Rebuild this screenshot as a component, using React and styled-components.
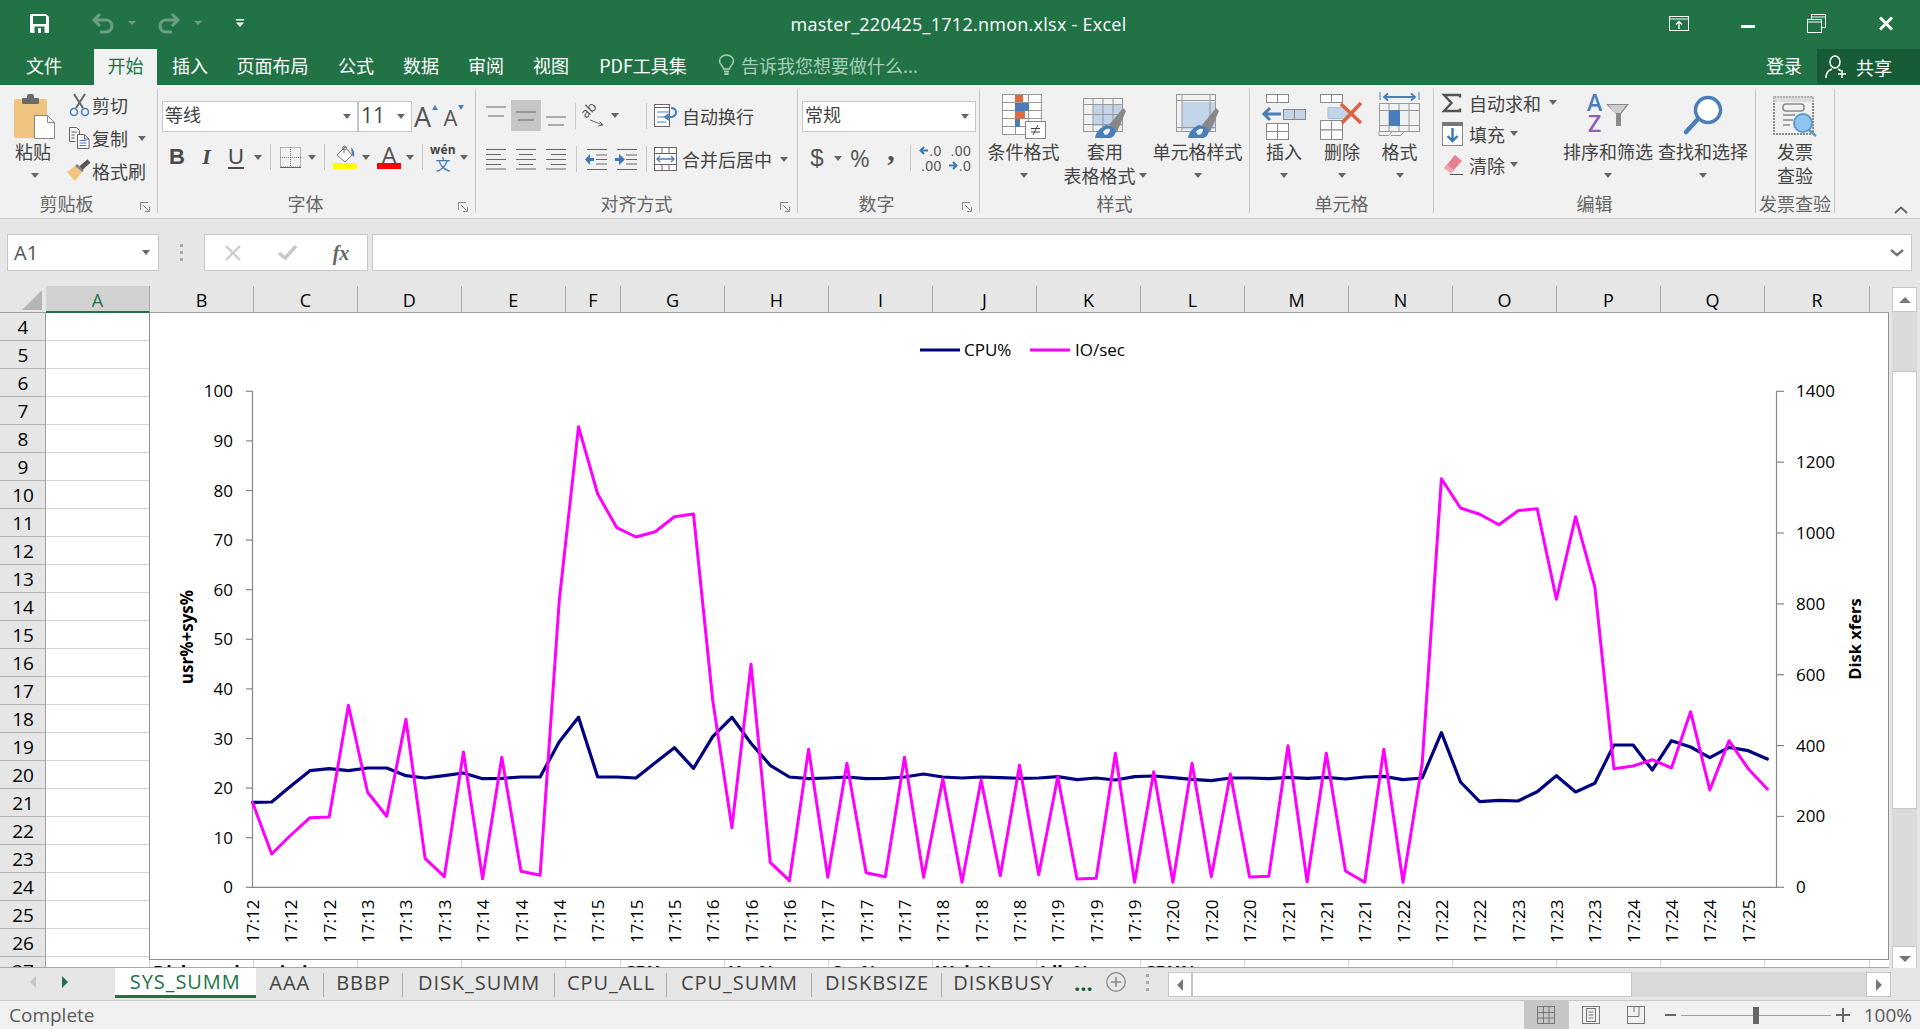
import React from 'react';
import styled, { createGlobalStyle } from 'styled-components';

const UI = `"Open Sans","Noto Sans CJK SC",sans-serif`;
const CJK = `"Noto Sans CJK SC","Open Sans",sans-serif`;
const GREEN = '#217346';
const BLUE = '#4a7ebb';

const Global = createGlobalStyle`
  html, body { margin: 0; padding: 0; width: 1920px; height: 1029px; overflow: hidden; background: #f1f1f1; }
  * { box-sizing: border-box; }
  #root { width: 1920px; height: 1029px; }
`;

const Window = styled.div`
  width: 1920px; height: 1029px; display: flex; flex-direction: column; font-family: ${CJK}; overflow: hidden;
`;
const Cell = styled.div`
  flex: 0 0 auto; width: ${p => p.$w}px; margin-left: ${p => p.$ml || 0}px; height: 100%;
  display: flex; align-items: center; justify-content: center;
`;
const Ico = styled.svg` display: block; flex: 0 0 auto; overflow: visible; `;

/* title bar */
const TitleBar = styled.header`
  height: 49px; background: ${GREEN}; display: grid; grid-template-columns: 1fr auto 1fr; flex: 0 0 auto;
`;
const Qat = styled.div` display: flex; height: 46px; padding-left: 12px; `;
const TitleText = styled.div`
  font: 18px/48px ${UI}; color: #fff; padding-right: 3px; white-space: nowrap; letter-spacing: .26px;
`;
const WinCtrls = styled.div` display: flex; justify-content: flex-end; height: 46px; `;
const DimCaret = styled.span`
  width: 0; height: 0; border-left: 4px solid transparent; border-right: 4px solid transparent; border-top: 4px solid #6b9e85;
`;

/* tabs */
const TabRow = styled.nav`
  height: 36px; background: ${GREEN}; display: flex; flex: 0 0 auto;
`;
const RibbonTab = styled.div`
  flex: 0 0 auto; width: ${p => p.$w}px; padding: 0 ${p => p.$pr || 0}px 4px 0; height: 100%; display: flex; align-items: center; justify-content: center;
  font: 18px/1 ${CJK}; white-space: nowrap;
  color: ${p => p.$active ? GREEN : '#fff'}; background: ${p => p.$active ? '#f1f1f1' : 'transparent'};
`;
const TellMe = styled.div`
  font: 18px/1 ${CJK}; color: #a6cdb8; display: flex; align-items: center; white-space: nowrap; padding-bottom: 4px;
`;
const LoginCell = styled(RibbonTab)` margin-left: auto; `;
const Share = styled.div`
  width: 103px; height: 35px; background: #185c37; display: flex; align-items: center; padding-left: 8px; gap: 8px;
  font: 18px/1 ${CJK}; color: #fff;
`;

/* ribbon */
const Ribbon = styled.section`
  height: 134px; flex: 0 0 auto; background: #f1f1f1; border-bottom: 1px solid #c6c6c6; display: flex; padding-top: 4px;
`;
const Group = styled.div`
  position: relative; flex: 0 0 auto; width: ${p => p.$w}px; height: 124px; border-right: 1px solid #c6c6c6;
`;
const GroupBody = styled.div`
  height: 104px; display: flex;
`;
const GroupLabel = styled.div`
  height: 20px; font: 18px/20px ${CJK}; color: #666; text-align: center; white-space: nowrap;
  padding-right: ${p => p.$pr || 0}px;
`;
const Launcher = styled.div`
  position: absolute; right: 7px; bottom: 1px; width: 10px; height: 10px;
`;
const Lbl = styled.span`
  font: 18px/24px ${CJK}; color: #444; white-space: nowrap; margin-left: ${p => p.$ml || 0}px;
`;
const Caret = styled.span`
  display: inline-block; flex: 0 0 auto; width: 0; height: 0; border-left: 4px solid transparent; border-right: 4px solid transparent; border-top: 5px solid #666;
  margin-left: ${p => p.$ml || 0}px;
`;
const PasteCol = styled.div`
  width: 66px; flex: 0 0 auto; display: flex; flex-direction: column; align-items: center; padding-top: 5px;
`;
const PasteIcon = styled.div` height: 45px; padding-left: 3px; `;
const CaretLine = styled.div`
  height: 24px; display: flex; align-items: center; justify-content: center; width: 100%;
`;
const ClipCol = styled.div`
  flex: 1; display: flex; flex-direction: column; gap: 9px; padding-top: 4px;
`;
const ClipRow = styled.div`
  height: 24px; display: flex; align-items: center; gap: 0;
`;
const StackCol = styled.div`
  flex: 0 0 auto; display: flex; flex-direction: column; padding-top: ${p => p.$pt || 12}px; padding-left: ${p => p.$pl || 0}px; gap: ${p => p.$gap ?? 11}px;
`;
const Row = styled.div`
  display: flex; align-items: center; height: ${p => p.$h || 31}px;
`;
const Combo = styled.div`
  width: ${p => p.$w}px; height: 31px; background: #fff; border: 1px solid #c6c6c6; display: flex; align-items: center; justify-content: space-between;
  padding: 0 6px 0 2px; flex: 0 0 auto; font: ${p => p.$fs || 18}px/1 ${UI}; color: #444;
`;
const ComboText = styled.span` padding-bottom: 3px; `;
const GrowA = styled.span`
  font: ${p => p.$s}px/1 ${UI}; color: #555;
`;
const TinyTri = styled.span`
  display: inline-block; width: 0; height: 0; border-left: 3.5px solid transparent; border-right: 3.5px solid transparent;
  ${p => p.$down ? `border-top: 5px solid ${BLUE};` : `border-bottom: 5px solid ${BLUE};`}
  margin-left: 1px; align-self: flex-start; margin-top: 4px;
`;
const FontBtn = styled.span`
  font: ${p => p.$i ? 'italic ' : ''}${p => p.$b ? 'bold ' : ''}22px/1 ${p => p.$serif ? '"Liberation Serif"' : '"Liberation Sans"'}, sans-serif; color: #4a4a4a;
  text-decoration: ${p => p.$u ? 'underline' : 'none'}; text-underline-offset: 3px;
`;
const VSep = styled.div`
  width: 1px; height: 26px; background: #c6c6c6;
`;
const ActiveAlign = styled.div`
  width: 30px; height: 31px; background: #c6c6c6; display: flex; align-items: center; justify-content: center; flex: 0 0 auto;
`;
const ColorA = styled.div`
  display: flex; flex-direction: column; align-items: center; width: 24px;
`;
const ColorAText = styled.span`
  font: 24px/20px ${UI}; color: #555; height: 18px;
`;
const ColorBar = styled.div`
  width: 24px; height: 6px; background: ${p => p.$c};
`;
const Wen = styled.div`
  display: flex; flex-direction: column; align-items: center;
`;
const WenTop = styled.span`
  font: bold 12px/12px "Open Sans", sans-serif; color: #444; letter-spacing: .2px;
`;
const WenBot = styled.span`
  font: 15px/15px ${CJK}; color: #3b78b7;
`;
const Cash = styled.span`
  font: 24px/1 ${p => p.$f || '"Liberation Sans"'}, sans-serif; color: #555;
`;
const Comma = styled.span`
  font: bold 30px/1 "Liberation Serif", serif; color: #555; margin-top: -16px;
`;
const Dec = styled.div`
  display: flex; flex-direction: column; align-items: flex-end; font: 14px/14px "Liberation Sans", sans-serif; color: #555; letter-spacing: .4px; gap: 1px;
`;
const DecLine = styled.div` display: flex; align-items: center; gap: 1px; `;
const LargeBtn = styled.div`
  flex: 0 0 auto; width: ${p => p.$w}px; display: flex; flex-direction: column; align-items: center; padding: 5px 0 0 ${p => p.$pl || 0}px;
`;
const IconSlot = styled.div` height: 45px; display: flex; justify-content: center; `;
const Line2 = styled.div`
  height: 24px; display: flex; align-items: center; justify-content: center; white-space: nowrap;
`;
const TextLine = styled.div`
  height: 24px; line-height: 24px; white-space: nowrap; text-align: center;
`;
const EditCol = styled.div` flex: 0 0 auto; width: 131px; display: flex; flex-direction: column; margin-top: -2px; `;
const EditRow = styled.div` height: 31px; display: flex; align-items: center; `;
const RibbonRest = styled.div`
  flex: 1; display: flex; justify-content: flex-end; align-items: flex-end; padding: 0 12px 4px 0;
`;

/* formula bar */
const FormulaBar = styled.div`
  height: 67px; flex: 0 0 auto; background: #e6e6e6; display: flex; padding: 15px 8px 15px 7px;
`;
const NameBox = styled.div`
  width: 152px; background: #fff; border: 1px solid #c6c6c6; display: flex; align-items: center; justify-content: space-between;
  padding: 0 8px 0 6px; font: 20px/1 ${UI}; color: #555;
`;
const FormulaBtns = styled.div`
  width: 164px; background: #fff; border: 1px solid #c6c6c6; display: flex; align-items: center;
`;
const FxText = styled.span`
  font: italic bold 20px/1 "Liberation Serif", serif; color: #666;
`;
const FormulaInput = styled.div`
  flex: 1; margin-left: 4px; background: #fff; border: 1px solid #c6c6c6; display: flex; align-items: center; justify-content: flex-end; padding-right: 7px;
`;

/* grid */
const SheetArea = styled.div`
  height: 682px; flex: 0 0 auto; display: flex; background: #e6e6e6;
`;
const SheetMain = styled.div` width: 1889px; flex: 0 0 auto; display: flex; flex-direction: column; `;
const ColHeaders = styled.div`
  height: 27px; display: flex; background: #e6e6e6; border-bottom: 1px solid #9f9f9f; flex: 0 0 auto;
`;
const Corner = styled.div`
  width: 46px; flex: 0 0 auto; position: relative;
`;
const ColHead = styled.div`
  width: ${p => p.$w}px; flex: 0 0 auto; display: flex; align-items: center; justify-content: center;
  font: 18px/1 ${UI}; padding-top: 2px; color: ${p => p.$sel ? GREEN : '#000'};
  background: ${p => p.$sel ? '#d2d2d2' : 'transparent'};
  border-right: 1px solid #ababab;
  border-bottom: ${p => p.$sel ? `2px solid ${GREEN}` : 'none'};
  margin-bottom: ${p => p.$sel ? '-1px' : '0'};
`;
const GridBody = styled.div`
  position: relative; height: 655px; background: #fff; overflow: hidden; border-bottom: 1px solid #a8a8a8;
`;
const GridRow = styled.div` height: 28px; display: flex; `;
const RowHead = styled.div`
  width: 46px; flex: 0 0 auto; background: #e6e6e6; display: flex; align-items: center; justify-content: center; padding: 2px 0 0 1px;
  font: 19px/1 ${UI}; color: #000; border-right: 1px solid #9f9f9f; border-bottom: 1px solid #b4b4b4;
`;
const GridCell = styled.div`
  width: ${p => p.$w}px; flex: 0 0 auto; border-right: 1px solid #d4d4d4; border-bottom: 1px solid #d4d4d4;
  font: bold 18px/30px "Open Sans", sans-serif; color: #000; white-space: nowrap; padding-left: 3px;
`;
const ChartFrame = styled.div`
  position: absolute; left: 149px; top: 0; width: 1740px; height: 647px; background: #fff;
  border: 1px solid #8f8f8f; border-top: none;
`;
const ChartT = styled.text`
  font: ${p => p.$b ? 'bold ' : ''}${p => p.$s || 17}px "Open Sans", sans-serif; fill: #000;
`;

/* vertical scroll */
const VScroll = styled.div`
  width: 31px; flex: 0 0 auto; display: flex; flex-direction: column; padding: 1px 3px 0 3px;
`;
const ScrollBtn = styled.div`
  height: ${p => p.$h || 25}px; width: ${p => p.$w || 25}px; flex: 0 0 auto; background: #fff; border: 1px solid #c6c6c6; display: flex; align-items: center; justify-content: center;
`;
const VTrack = styled.div`
  height: 634px; background: #dadada; display: flex; flex-direction: column; flex: 0 0 auto;
`;
const VThumb = styled.div`
  margin-top: 59px; height: 438px; background: #fff; border: 1px solid #c6c6c6;
`;
const Tri = styled.span`
  width: 0; height: 0; display: block;
  ${p => p.$dir === 'up' && 'border-left:6px solid transparent;border-right:6px solid transparent;border-bottom:6px solid #777;'}
  ${p => p.$dir === 'down' && 'border-left:6px solid transparent;border-right:6px solid transparent;border-top:6px solid #777;'}
  ${p => p.$dir === 'left' && 'border-top:6px solid transparent;border-bottom:6px solid transparent;border-right:6px solid #777;'}
  ${p => p.$dir === 'right' && 'border-top:6px solid transparent;border-bottom:6px solid transparent;border-left:6px solid #777;'}
`;

/* tabs bar */
const TabBar = styled.div`
  height: 33px; flex: 0 0 auto; background: #e6e6e6; border-bottom: 1px solid #c8c8c8; display: flex;
`;
const TabsLeft = styled.div` width: 1168px; flex: 0 0 auto; display: flex; `;
const TabNav = styled.div` width: 115px; flex: 0 0 auto; display: flex; align-items: center; padding-bottom: 4px; `;
const NavTri = styled.span`
  width: 0; height: 0; border-top: 6px solid transparent; border-bottom: 6px solid transparent; flex: 0 0 auto;
  ${p => p.$left ? 'border-right: 6px solid #c6c6c6;' : `border-left: 6px solid ${GREEN};`}
  margin-left: ${p => p.$ml}px;
`;
const SheetTab = styled.div`
  width: ${p => p.$w}px; flex: 0 0 auto; height: 30px; display: flex; align-items: center; justify-content: center; white-space: nowrap;
  font: 20px/1 "Open Sans", sans-serif; letter-spacing: .95px;
  color: ${p => p.$active ? GREEN : '#444'};
  background: ${p => p.$active ? '#fff' : 'transparent'};
  border-bottom: ${p => p.$active ? `3px solid ${GREEN}` : '0'};
  position: relative;
  &::after {
    content: ''; position: absolute; right: 0; top: 5px; bottom: 1px; width: 1px; background: ${p => p.$active || p.$nosep ? 'transparent' : '#ababab'};
  }
`;
const More = styled.span`
  font: bold 22px/1 "Open Sans", sans-serif; color: #0f5c2e; margin-left: 9px; padding-top: 3px; letter-spacing: 0;
`;
const HScroll = styled.div`
  display: flex; height: 25px; margin-top: 4px; width: 723px; flex: 0 0 auto;
`;
const HThumb = styled.div`
  width: 440px; background: #fff; border: 1px solid #c6c6c6; flex: 0 0 auto;
`;
const HTrack = styled.div` flex: 1; background: #d9d9d9; `;

/* status */
const StatusBar = styled.footer`
  height: 28px; flex: 0 0 auto; background: #f1f1f1; display: flex; align-items: center; font: 19px/1 "Open Sans", sans-serif; color: #5a5a5a;
`;
const StatusText = styled.span` margin-left: 9px; margin-right: auto; `;
const ViewBtn = styled.div`
  width: 45px; height: 28px; flex: 0 0 auto; display: flex; align-items: center; justify-content: center;
  background: ${p => p.$active ? '#c6c6c6' : 'transparent'};
`;
const Slider = styled.div`
  width: 150px; height: 1px; background: #a0a0a0; position: relative; flex: 0 0 auto;
`;
const SliderThumb = styled.div`
  position: absolute; left: 72px; top: -8px; width: 6px; height: 17px; background: #666;
`;
const Zoom = styled.span` margin: 0 8px 0 14px; `;

/* ------------ icons ------------ */
const SaveIcon = () => (
  <Ico width="19" height="19" viewBox="0 0 19 19">
    <path d="M1 0h15l3 3v15a1 1 0 0 1-1 1H1a1 1 0 0 1-1-1V1a1 1 0 0 1 1-1z" fill="#fff" />
    <rect x="3" y="2" width="13" height="8" fill={GREEN} />
    <rect x="4.5" y="12.5" width="10" height="6.5" fill={GREEN} />
    <rect x="8" y="14" width="3" height="5" fill="#fff" />
  </Ico>
);
const UndoIcon = ({ flip }) => (
  <Ico width="22" height="20" viewBox="0 0 22 20" style={flip ? { transform: 'scaleX(-1)' } : undefined}>
    <path d="M8 1 L2 7 L8 13 M2 7 H14 a6 6 0 0 1 0 12 H8" fill="none" stroke="#6b9e85" strokeWidth="3" />
  </Ico>
);
const QatMore = () => (
  <Ico width="8" height="9" viewBox="0 0 8 9"><rect x="0" y="0" width="8" height="1.5" fill="#fff" /><path d="M0 3.5h8L4 8z" fill="#fff" /></Ico>
);
const RibbonDisplay = () => (
  <Ico width="20" height="15" viewBox="0 0 20 15">
    <rect x=".5" y=".5" width="19" height="14" fill="none" stroke="#fff" />
    <line x1="0" y1="3" x2="20" y2="3" stroke="#fff" />
    <path d="M10 13V6M7 8.5l3-3 3 3" fill="none" stroke="#fff" strokeWidth="1.4" />
  </Ico>
);
const MinIcon = () => <Ico width="14" height="3" viewBox="0 0 14 3" style={{ marginTop: 6 }}><rect width="14" height="3" fill="#fff" /></Ico>;
const RestoreIcon = () => (
  <Ico width="19" height="19" viewBox="0 0 19 19">
    <rect x="4.5" y=".5" width="14" height="13" fill="none" stroke="#fff" />
    <line x1="4" y1="3" x2="19" y2="3" stroke="#fff" />
    <rect x=".5" y="5.5" width="14" height="13" fill={GREEN} stroke="#fff" />
    <line x1="0" y1="8" x2="15" y2="8" stroke="#fff" />
  </Ico>
);
const CloseIcon = () => <Ico width="14" height="13" viewBox="0 0 14 13"><path d="M1 0.5 L13 12.5 M13 0.5 L1 12.5" stroke="#fff" strokeWidth="3" /></Ico>;
const Bulb = () => (
  <Ico width="17" height="21" viewBox="0 0 17 21" fill="none" stroke="#a6cdb8" strokeWidth="1.5" style={{ marginBottom: 4 }}>
    <path d="M5.5 14c0-3-4-4-4-8a7 6 0 0 1 14 0c0 4-4 5-4 8z" />
    <path d="M6 16.5h5M6.5 19h4" strokeWidth="2" />
  </Ico>
);
const PersonPlus = () => (
  <Ico width="23" height="24" viewBox="0 0 23 24" fill="none" stroke="#fff" strokeWidth="1.5">
    <ellipse cx="10" cy="7" rx="5" ry="6" />
    <path d="M1 23c0-5 3-8 6-9M13 14c1 .5 2 1 3 2" />
    <path d="M17 15v8M13 19h8" />
  </Ico>
);
const PasteIco = () => (
  <Ico width="42" height="46" viewBox="0 0 42 46">
    <rect x="0" y="5" width="33" height="39" rx="2" fill="#efc47f" />
    <rect x="8" y="4" width="17" height="6" rx="1" fill="#6a6a6a" />
    <rect x="13" y="0" width="7" height="6" rx="2" fill="#6a6a6a" />
    <path d="M20.5 21.5h13l7 7v16h-20z" fill="#fff" stroke="#888" />
    <path d="M33.5 21.5v7h7" fill="none" stroke="#888" />
  </Ico>
);
const CutIco = () => (
  <Ico width="21" height="23" viewBox="0 0 21 23" fill="none">
    <path d="M7 14L16 0M14 14L5 0" stroke="#666" strokeWidth="2" />
    <circle cx="5" cy="18" r="3.5" stroke={BLUE} strokeWidth="1.6" />
    <circle cx="16" cy="18" r="3.5" stroke={BLUE} strokeWidth="1.6" />
  </Ico>
);
const CopyIco = () => (
  <Ico width="21" height="22" viewBox="0 0 21 22" fill="none" stroke="#666">
    <path d="M.5.5h7l3 3v4M.5.5v14h6" />
    <path d="M2.5 5h5M2.5 8h3M2.5 11h3" />
    <path d="M8.5 7.5h7l4.5 4.5v9.5H8.5z" fill="#fff" />
    <path d="M15.5 7.5v4.5h4.5" />
    <path d="M10.5 13.5h7M10.5 16h7M10.5 18.5h7" stroke={BLUE} />
  </Ico>
);
const PainterIco = () => (
  <Ico width="24" height="22" viewBox="0 0 24 22">
    <path d="M0 12l8-6 7 6-7 9z" fill="#efc47f" />
    <path d="M8 6l7 6 2-2-7-6z" fill="#888" />
    <path d="M14 8l8-7" stroke="#555" strokeWidth="4.5" />
  </Ico>
);
const Launch = () => (
  <Ico width="10" height="10" viewBox="0 0 10 10" fill="none" stroke="#888">
    <path d="M.5 8V.5H8" /><path d="M3 3l5.5 5.5M9.5 5v4.5H5" />
  </Ico>
);
const Borders = () => (
  <Ico width="21" height="21" viewBox="0 0 21 21" fill="none" stroke="#777">
    <rect x=".5" y=".5" width="20" height="19.5" strokeDasharray="1 1" />
    <path d="M10.5 0v20M0 10.5h21" strokeDasharray="1 1" />
    <path d="M0 20.5h21" stroke="#666" />
  </Ico>
);
const Bucket = () => (
  <Ico width="24" height="18" viewBox="0 0 24 18" fill="none">
    <path d="M4 10l8-8 7 8-7 7z" fill="#fff" stroke="#777" />
    <path d="M11 1.5v7" stroke="#777" />
    <circle cx="11.5" cy="3" r="2" stroke="#777" />
    <path d="M18 2c3 3 4 6 3 10l-2-2z" fill={BLUE} />
  </Ico>
);
const AlignLines = ({ kind }) => {
  const y = kind === 'top' ? [5, 14] : kind === 'mid' ? [10, 18] : [15, 23];
  return (
    <Ico width="20" height="28" viewBox="0 0 20 28" stroke="#666">
      <line x1="0" x2="20" y1={y[0]} y2={y[0]} /><line x1="2" x2="18" y1={y[1]} y2={y[1]} />
    </Ico>
  );
};
const TextLines = ({ kind }) => {
  const ys = [0, 5, 10, 15, 19.5];
  return (
    <Ico width="20" height="21" viewBox="0 0 20 21" stroke="#666">
      {ys.map((yy, i) => {
        const short = i % 2 === 1;
        const x1 = kind === 'right' && short ? 5 : kind === 'center' && short ? 3 : 0;
        const x2 = kind === 'left' && short ? 15 : kind === 'center' && short ? 17 : 20;
        return <line key={i} x1={x1} x2={x2} y1={yy + .5} y2={yy + .5} />;
      })}
    </Ico>
  );
};
const Orient = () => (
  <Ico width="22" height="20" viewBox="0 0 22 20">
    <text x="0" y="0" transform="translate(2 13) rotate(-45)" style={{ font: '14px "Open Sans", sans-serif', fill: '#555' }}>ab</text>
    <path d="M6 14L19 19M15.500 15.500 L19 19 L14 20" stroke="#666" fill="none" />
  </Ico>
);
const Indent = ({ right }) => (
  <Ico width="22" height="21" viewBox="0 0 22 21" stroke="#666">
    <line x1="2" x2="22" y1=".5" y2=".5" /><line x1="2" x2="22" y1="20.5" y2="20.5" />
    <line x1="11" x2="22" y1="6" y2="6" /><line x1="11" x2="22" y1="10.5" y2="10.5" /><line x1="11" x2="22" y1="15" y2="15" />
    {right
      ? <path d="M0 9h4V5l6 5.500-6 5.500v-4H0z" fill="#3b78b7" stroke="none" />
      : <path d="M9 9H5V5L0 10.500 5 16v-4h4z" fill="#3b78b7" stroke="none" />}
  </Ico>
);
const WrapIco = () => (
  <Ico width="24" height="23" viewBox="0 0 24 23" fill="none" stroke="#666">
    <rect x=".5" y=".5" width="15" height="22" fill="#fff" />
    <path d="M0 3.500h15" /><path d="M3 8h12M3 13h7M3 18h9" stroke={BLUE} />
    <path d="M17 4c6 0 7 7 1 9h-6" stroke={BLUE} strokeWidth="2" /><path d="M15 10l-4 3 4 3" stroke={BLUE} strokeWidth="2" />
  </Ico>
);
const MergeIco = () => (
  <Ico width="23" height="24" viewBox="0 0 23 24" fill="none" stroke="#666">
    <rect x=".5" y=".5" width="22" height="23" fill="#fff" />
    <path d="M0 6.500h23M0 17.500h23M8 .5v6M15 .5v6M8 17.500v6M15 17.500v6" />
    <path d="M3 12h17M6 9l-3 3 3 3M17 9l3 3-3 3" stroke={BLUE} strokeWidth="1.3" />
  </Ico>
);
const DecArrow = ({ right }) => (
  <Ico width="9" height="9" viewBox="0 0 9 9"><path d={right ? 'M0 4.500h7M4 1l3.500 3.500L4 8' : 'M9 4.500H2M5 1L1.500 4.500 5 8'} fill="none" stroke="#3b78b7" strokeWidth="2" /></Ico>
);
const Neq = () => <path d="M29 34.500h9M29 38h9M36 31l-5 10" stroke="#444" fill="none" />;
const CondIco = () => (
  <Ico width="44" height="46" viewBox="0 0 44 46">
    <g stroke="#999" fill="#fff">
      {[0, 1, 2, 3, 4].map(r => [0, 1, 2].map(c => <rect key={`${r}${c}`} x={.5 + c * 13} y={.5 + r * 8} width="13" height="8" />))}
    </g>
    <rect x="13" y="1" width="8" height="7" fill="#d96b47" />
    <rect x="13" y="9" width="14" height="8" fill={BLUE} />
    <rect x="13" y="17" width="10" height="8" fill="#d96b47" />
    <rect x="13" y="25" width="5" height="8" fill={BLUE} />
    <rect x="23.500" y="27.500" width="20" height="17" fill="#fff" stroke="#888" />
    <Neq />
  </Ico>
);
const Brush = ({ x, y }) => (
  <g transform={`translate(${x} ${y})`}>
    <path d="M14 17L28 0l3 3-9 21-4-2z" fill="#888" />
    <path d="M0 30c1-7 6-11 11-13 3 0 8 3 10 5 0 4-3 8-6 8z" fill={BLUE} />
    <path d="M8 24c1-2 4-4 7-3 0 3-2 6-5 6z" fill="#fff" opacity=".9" />
  </g>
);
const TableIco = () => (
  <Ico width="44" height="46" viewBox="0 0 44 46">
    <rect x="10" y="10" width="30" height="22" fill="#c2d4e8" />
    <g stroke="#999" fill="none">
      <rect x=".5" y="4.500" width="39" height="33" />
      <path d="M10 4.500v33M20 4.500v33M30 4.500v33M0 10.500h40M0 20.500h40M0 30.500h40" />
    </g>
    <Brush x="12" y="14" />
  </Ico>
);
const CellStyleIco = () => (
  <Ico width="44" height="46" viewBox="0 0 44 46">
    <rect x="6" y="8" width="33" height="27" fill="#c2d4e8" />
    <g stroke="#999" fill="none">
      <rect x=".5" y=".5" width="39" height="37" />
      <path d="M6 .5v37M34 .5v37M0 6.500h40M0 33.500h40" />
    </g>
    <Brush x="12" y="14" />
  </Ico>
);
const InsertIco = () => (
  <Ico width="43" height="46" viewBox="0 0 43 46" fill="#fff" stroke="#888">
    <rect x="3.500" y=".5" width="11" height="8" />
    <rect x="14.500" y=".5" width="11" height="8" />
    <rect x="3.500" y="29.500" width="11" height="8" />
    <rect x="14.500" y="29.500" width="11" height="8" />
    <rect x="3.500" y="37.500" width="11" height="8" />
    <rect x="14.500" y="37.500" width="11" height="8" />
    <rect x="20.500" y="15.500" width="11" height="10" fill="#c2d4e8" />
    <rect x="31.500" y="15.500" width="11" height="10" fill="#c2d4e8" />
    <path d="M0 20h18M7 14l-6 6 6 6" fill="none" stroke={BLUE} strokeWidth="3" />
  </Ico>
);
const DeleteIco = () => (
  <Ico width="44" height="46" viewBox="0 0 44 46" fill="#fff" stroke="#888">
    <rect x=".5" y=".5" width="11" height="8" />
    <rect x="11.500" y=".5" width="11" height="8" />
    <rect x=".5" y="26.500" width="11" height="9.500" />
    <rect x="11.500" y="26.500" width="11" height="9.500" />
    <rect x=".5" y="36" width="11" height="9.500" />
    <rect x="11.500" y="36" width="11" height="9.500" />
    <path d="M8 13.500h16l6 5.500-6 5.500H8z" fill="#c2d4e8" stroke="#a5bfd9" />
    <path d="M21 10l20 19M41 9L22 29" stroke="#dd6240" strokeWidth="3.500" fill="none" />
  </Ico>
);
const FormatIco = () => (
  <Ico width="42" height="48" viewBox="0 0 42 48" style={{ marginTop: -2 }}>
    <path d="M1 0v8M40 0v8" stroke={BLUE} fill="none" />
    <path d="M5 5h31M9 1.500L5 5l4 3.500M32 1.500L36 5l-4 3.500" stroke={BLUE} strokeWidth="1.800" fill="none" />
    <g stroke="#999" fill="none">
      <rect x=".5" y="11.500" width="40" height="28" />
      <path d="M10 11.500v28M20 11.500v28M30 11.500v28M0 18.500h41M0 33.500h41" />
      <path d="M0 39.500v4h10l3-4M12 43.500h10l3-4" />
    </g>
    <rect x="10" y="18" width="11" height="16" fill={BLUE} />
  </Ico>
);
const SigmaIco = () => (
  <Ico width="20" height="18" viewBox="0 0 20 18"><path d="M18 3.500V1H2l7.500 8L2 17h16v-2.500" fill="none" stroke="#555" strokeWidth="2.4" /></Ico>
);
const FillIco = () => (
  <Ico width="21" height="24" viewBox="0 0 21 24">
    <rect x=".5" y=".5" width="20" height="23" fill="#fff" stroke="#888" />
    <rect x="0" y="0" width="21" height="4" fill="#777" />
    <path d="M10.500 6v13M5.500 14l5 5 5-5" fill="none" stroke="#3b78b7" strokeWidth="2.400" />
  </Ico>
);
const EraserIco = () => (
  <Ico width="21" height="21" viewBox="0 0 21 21">
    <path d="M13 1l7 6-11 12-7-5z" fill="#e8808f" />
    <path d="M2 14l7 5 3-3-7-5z" fill="#f0a7b0" />
    <line x1="8" y1="20.500" x2="21" y2="20.500" stroke="#555" />
  </Ico>
);
const SortIco = () => (
  <Ico width="43" height="46" viewBox="0 0 43 46">
    <text x="0" y="17" style={{ font: '600 23px "Open Sans", sans-serif', fill: '#4a7ebb' }}>A</text>
    <text x="1" y="38" style={{ font: '600 23px "Open Sans", sans-serif', fill: '#8e5fb5' }}>Z</text>
    <path d="M19 10h23l-8 10v12h-5V20z" fill="#8a8a8a" /><path d="M21.500 11h18l-6 8h-6z" fill="#ccc" />
  </Ico>
);
const FindIco = () => (
  <Ico width="40" height="46" viewBox="0 0 40 46" fill="none">
    <circle cx="25" cy="16" r="12.500" fill="#fff" stroke={BLUE} strokeWidth="3.500" />
    <path d="M15 25L3 38" stroke={BLUE} strokeWidth="4.500" strokeLinecap="round" />
  </Ico>
);
const InvoiceIco = () => (
  <Ico width="47" height="46" viewBox="0 0 47 46" fill="none">
    <rect x="2" y="3" width="39" height="37" stroke="#8a8a8a" strokeWidth="2" strokeDasharray="2 1" />
    <rect x="1" y="2" width="41" height="6" fill="#d0d0d0" opacity=".6" />
    <rect x="11" y="10" width="21" height="7" rx="3" stroke="#8a8a8a" strokeWidth="1.600" />
    <path d="M11 21h12M11 26h10M11 31h7" stroke="#8a8a8a" strokeWidth="1.500" />
    <circle cx="31" cy="29" r="9" fill="#90c4f0" stroke="#5c9bc9" strokeWidth="2" />
    <path d="M37 36l7 6" stroke="#5c9bc9" strokeWidth="2.500" />
  </Ico>
);
const ChevUp = () => <Ico width="14" height="8" viewBox="0 0 14 8"><path d="M1 7l6-5.500L13 7" fill="none" stroke="#666" strokeWidth="2" /></Ico>;
const ChevDown = () => <Ico width="14" height="8" viewBox="0 0 14 8"><path d="M1 1l6 5 6-5" fill="none" stroke="#777" strokeWidth="2.500" /></Ico>;
const SepDots = () => (
  <Ico width="3" height="17" viewBox="0 0 3 17" fill="#aaa"><rect width="3" height="3" /><rect y="7" width="3" height="3" /><rect y="14" width="3" height="3" /></Ico>
);
const XIcon = () => <Ico width="16" height="16" viewBox="0 0 16 16"><path d="M1 1l14 14M15 1L1 15" stroke="#c8c8c8" strokeWidth="2" /></Ico>;
const CheckIcon = () => <Ico width="19" height="15" viewBox="0 0 19 15"><path d="M1 8l6 5L18 1" fill="none" stroke="#c8c8c8" strokeWidth="3.500" /></Ico>;
const PlusCircle = () => (
  <Ico width="20" height="20" viewBox="0 0 20 20" fill="none" stroke="#8a8a8a" strokeWidth="1.300"><circle cx="10" cy="10" r="9.300" /><path d="M10 5v10M5 10h10" strokeWidth="1.600" /></Ico>
);
const GridView = () => (
  <Ico width="18" height="18" viewBox="0 0 18 18" fill="none" stroke="#777"><rect x=".5" y=".5" width="17" height="17" /><path d="M6.500 0v18M12 0v18M0 6.500h18M0 12h18" /></Ico>
);
const PageView = () => (
  <Ico width="18" height="18" viewBox="0 0 18 18" fill="none" stroke="#777"><rect x=".5" y=".5" width="17" height="17" /><rect x="4.500" y="2.500" width="9" height="13" /><path d="M6.500 6h5M6.500 9h5M6.500 12h5" /></Ico>
);
const BreakView = () => (
  <Ico width="18" height="18" viewBox="0 0 18 18" fill="none" stroke="#777"><rect x=".5" y=".5" width="17" height="17" /><path d="M0 10.500h12V0M7 0v6" /></Ico>
);
const ThinSvgMinus = () => <Ico width="11" height="2" viewBox="0 0 11 2"><rect width="11" height="2" fill="#666" /></Ico>;
const ThinSvgPlus = () => <Ico width="14" height="14" viewBox="0 0 14 14"><path d="M7 0v14M0 7h14" stroke="#666" strokeWidth="2" /></Ico>;

/* ------------ chart data ------------ */
const navy = [1267,1266,1218,1172,1166,1172,1164,1164,1187,1194,1187,1179,1196,1195,1191,1191,1085,1012,1191,1191,1194,1148,1103,1165,1070,1012,1090,1156,1191,1196,1194,1191,1196,1195,1191,1182,1191,1194,1191,1193,1195,1194,1190,1199,1194,1200,1190,1188,1193,1198,1202,1194,1194,1196,1192,1195,1192,1197,1191,1189,1199,1194,1058,1206,1265,1261,1263,1235,1187,1236,1210,1095,1095,1170,1082,1101,1133,1102,1112,1137];
const magenta = [1267,1422,1365,1313,1311,976,1237,1309,1018,1435,1490,1116,1496,1132,1474,1486,660,140,342,443,471,455,410,402,960,1343,853,1447,1502,1108,1492,1150,1478,1490,1132,1492,1196,1507,1200,1487,1156,1484,1190,1497,1495,1120,1507,1175,1507,1150,1490,1182,1491,1489,1097,1505,1120,1473,1507,1108,1507,1150,296,384,403,434,392,386,658,410,620,1166,1158,1139,1164,995,1230,1082,1166,1227];
const px = i => 253.5 + i * 19.175;
const py = v => 380 + v / 3;
const poly = a => a.map((v, i) => `${px(i).toFixed(1)},${py(v).toFixed(1)}`).join(' ');
const TOP = 391.3, BOT = 887.3;
const minuteLabels = [];
for (let m = 12; m <= 24; m++) minuteLabels.push(`17:${m}`, `17:${m}`, `17:${m}`);
minuteLabels.push('17:25');

const Chart = () => (
  <Ico width="1740" height="647" viewBox="150 313 1740 647" style={{ marginLeft: -1 }}>
    <line x1="921" x2="961" y1="350" y2="350" stroke="#000080" strokeWidth="3.2" />
    <ChartT x="965" y="356">CPU%</ChartT>
    <line x1="1031" x2="1071" y1="350" y2="350" stroke="#ff00ff" strokeWidth="3.2" />
    <ChartT x="1076" y="356">IO/sec</ChartT>
    <g stroke="#868686" strokeWidth="1.2" fill="none">
      <line x1="253.500" x2="253.500" y1={TOP} y2={BOT} />
      <line x1="1777.500" x2="1777.500" y1={TOP} y2={BOT} />
      <line x1="253" x2="1778" y1={BOT} y2={BOT} />
      {Array.from({ length: 11 }, (_, i) => <line key={i} x1="247" x2="253.500" y1={TOP + i * 49.6} y2={TOP + i * 49.6} />)}
      {Array.from({ length: 8 }, (_, i) => <line key={i} x1="1777.500" x2="1785" y1={TOP + i * 70.857} y2={TOP + i * 70.857} />)}
    </g>
    {Array.from({ length: 11 }, (_, i) => <ChartT key={i} x="234" y={TOP + i * 49.6 + 6} textAnchor="end">{100 - i * 10}</ChartT>)}
    {Array.from({ length: 8 }, (_, i) => <ChartT key={i} x="1797" y={TOP + i * 70.857 + 6}>{1400 - i * 200}</ChartT>)}
    {minuteLabels.map((t, i) => (
      <ChartT key={i} transform={`translate(${(px(i * 2) + 6.5).toFixed(1)} 943) rotate(-90)`}>{t}</ChartT>
    ))}
    <ChartT $b $s={17} transform="translate(194 637) rotate(-90)" textAnchor="middle">usr%+sys%</ChartT>
    <ChartT $b $s={16.5} transform="translate(1862 639) rotate(-90)" textAnchor="middle">Disk xfers</ChartT>
    <polyline points={poly(navy)} fill="none" stroke="#000080" strokeWidth="3.2" strokeLinejoin="round" strokeLinecap="round" />
    <polyline points={poly(magenta)} fill="none" stroke="#ff00ff" strokeWidth="3" strokeLinejoin="round" strokeLinecap="round" />
  </Ico>
);

/* ------------ data ------------ */
const COLS = [['A',104],['B',104],['C',104],['D',103.500],['E',104.500],['F',55],['G',104],['H',104],['I',104],['J',104],['K',104],['L',104],['M',104],['N',104],['O',104],['P',104],['Q',104],['R',105]];
const ROWS = Array.from({ length: 24 }, (_, i) => i + 4);
const R27 = { B: 'Disk total statistics', G: 'CPU', H: 'Usr%', I: 'Sys%', J: 'Wait%', K: 'Idle%', L: 'CPU%' };
const TABS = [['SYS_SUMM',140.500,true],['AAA',68.500],['BBBP',79],['DISK_SUMM',152],['CPU_ALL',112],['CPU_SUMM',145],['DISKBSIZE',130],['DISKBUSY',123,false,true]];

export default function App() {
  return (
    <Window>
      <Global />
      <TitleBar>
        <Qat>
          <Cell $w={54}><SaveIcon /></Cell>
          <Cell $w={38} $ml={18}><UndoIcon /></Cell>
          <Cell $w={20}><DimCaret /></Cell>
          <Cell $w={38} $ml={8}><UndoIcon flip /></Cell>
          <Cell $w={20}><DimCaret /></Cell>
          <Cell $w={20} $ml={22}><QatMore /></Cell>
        </Qat>
        <TitleText>master_220425_1712.nmon.xlsx - Excel</TitleText>
        <WinCtrls>
          <Cell $w={69}><RibbonDisplay /></Cell>
          <Cell $w={69}><MinIcon /></Cell>
          <Cell $w={69}><RestoreIcon /></Cell>
          <Cell $w={69}><CloseIcon /></Cell>
        </WinCtrls>
      </TitleBar>

      <TabRow>
        <RibbonTab $w={94} $pr={6}>文件</RibbonTab>
        <RibbonTab $w={63} $active>开始</RibbonTab>
        <RibbonTab $w={66}>插入</RibbonTab>
        <RibbonTab $w={99}>页面布局</RibbonTab>
        <RibbonTab $w={68}>公式</RibbonTab>
        <RibbonTab $w={62}>数据</RibbonTab>
        <RibbonTab $w={68}>审阅</RibbonTab>
        <RibbonTab $w={62}>视图</RibbonTab>
        <RibbonTab $w={122}>PDF工具集</RibbonTab>
        <Cell $w={30} $ml={7}><Bulb /></Cell>
        <TellMe>告诉我您想要做什么...</TellMe>
        <LoginCell $w={66}>登录</LoginCell>
        <Share><PersonPlus />共享</Share>
      </TabRow>

      <Ribbon>
        <Group $w={158}>
          <GroupBody>
            <PasteCol>
              <PasteIcon><PasteIco /></PasteIcon>
              <TextLine><Lbl>粘贴</Lbl></TextLine>
              <CaretLine><Caret $ml={4} /></CaretLine>
            </PasteCol>
            <ClipCol>
              <ClipRow><Cell $w={26}><CutIco /></Cell><Lbl>剪切</Lbl></ClipRow>
              <ClipRow><Cell $w={26}><CopyIco /></Cell><Lbl>复制</Lbl><Caret $ml={10} /></ClipRow>
              <ClipRow><Cell $w={26}><PainterIco /></Cell><Lbl>格式刷</Lbl></ClipRow>
            </ClipCol>
          </GroupBody>
          <GroupLabel $pr={24}>剪贴板</GroupLabel>
          <Launcher><Launch /></Launcher>
        </Group>

        <Group $w={318}>
          <GroupBody>
            <StackCol $pl={4} $gap={10}>
              <Row>
                <Combo $w={196}><ComboText>等线</ComboText><Caret /></Combo>
                <Combo $w={54} $fs={21}><ComboText>11</ComboText><Caret /></Combo>
                <Cell $w={28}><GrowA $s={27}>A</GrowA><TinyTri /></Cell>
                <Cell $w={28}><GrowA $s={22}>A</GrowA><TinyTri $down /></Cell>
              </Row>
              <Row $h={30}>
                <Cell $w={30}><FontBtn $b>B</FontBtn></Cell>
                <Cell $w={29}><FontBtn $i $serif $b>I</FontBtn></Cell>
                <Cell $w={30}><FontBtn $u>U</FontBtn></Cell>
                <Cell $w={14}><Caret /></Cell>
                <Cell $w={10}><VSep /></Cell>
                <Cell $w={31}><Borders /></Cell>
                <Cell $w={12}><Caret /></Cell>
                <Cell $w={13}><VSep /></Cell>
                <Cell $w={28}>
                  <ColorA><Bucket /><ColorBar $c="#ffff00" /></ColorA>
                </Cell>
                <Cell $w={14}><Caret /></Cell>
                <Cell $w={32}>
                  <ColorA><ColorAText>A</ColorAText><ColorBar $c="#ff0000" /></ColorA>
                </Cell>
                <Cell $w={10}><Caret /></Cell>
                <Cell $w={14}><VSep /></Cell>
                <Cell $w={28}><Wen><WenTop>wén</WenTop><WenBot>文</WenBot></Wen></Cell>
                <Cell $w={14}><Caret /></Cell>
              </Row>
            </StackCol>
          </GroupBody>
          <GroupLabel $pr={22}>字体</GroupLabel>
          <Launcher><Launch /></Launcher>
        </Group>

        <Group $w={322}>
          <GroupBody>
            <StackCol $pl={5} $pt={11} $gap={13}>
              <Row>
                <Cell $w={30}><AlignLines kind="top" /></Cell>
                <ActiveAlign><AlignLines kind="mid" /></ActiveAlign>
                <Cell $w={30}><AlignLines kind="bot" /></Cell>
                <Cell $w={9}><VSep /></Cell>
                <Cell $w={30}><Orient /></Cell>
                <Cell $w={10}><Caret /></Cell>
                <Cell $w={10} $ml={21}><VSep /></Cell>
                <Cell $w={30}><WrapIco /></Cell>
                <Lbl $ml={1}>自动换行</Lbl>
              </Row>
              <Row $h={30}>
                <Cell $w={30}><TextLines kind="left" /></Cell>
                <Cell $w={30}><TextLines kind="center" /></Cell>
                <Cell $w={30}><TextLines kind="right" /></Cell>
                <Cell $w={10}><VSep /></Cell>
                <Cell $w={30}><Indent /></Cell>
                <Cell $w={30}><Indent right /></Cell>
                <Cell $w={10}><VSep /></Cell>
                <Cell $w={28}><MergeIco /></Cell>
                <Lbl $ml={3}>合并后居中</Lbl>
                <Cell $w={24}><Caret /></Cell>
              </Row>
            </StackCol>
          </GroupBody>
          <GroupLabel $pr={0}>对齐方式</GroupLabel>
          <Launcher><Launch /></Launcher>
        </Group>

        <Group $w={182}>
          <GroupBody>
            <StackCol $pl={4}>
              <Row><Combo $w={174}><ComboText>常规</ComboText><Caret /></Combo></Row>
              <Row $h={30}>
                <Cell $w={30}><Cash>$</Cash></Cell>
                <Cell $w={12}><Caret /></Cell>
                <Cell $w={32}><Cash $f={'"Open Sans"'}>%</Cash></Cell>
                <Cell $w={30}><Comma>,</Comma></Cell>
                <Cell $w={8}><VSep /></Cell>
                <Cell $w={33}><Dec><DecLine><DecArrow />.0</DecLine><DecLine>.00</DecLine></Dec></Cell>
                <Cell $w={26}><Dec><DecLine>.00</DecLine><DecLine><DecArrow right />.0</DecLine></Dec></Cell>
              </Row>
            </StackCol>
          </GroupBody>
          <GroupLabel $pr={24}>数字</GroupLabel>
          <Launcher><Launch /></Launcher>
        </Group>

        <Group $w={270}>
          <GroupBody>
            <LargeBtn $w={87}>
              <IconSlot><CondIco /></IconSlot>
              <TextLine><Lbl>条件格式</Lbl></TextLine>
              <Line2><Caret /></Line2>
            </LargeBtn>
            <LargeBtn $w={76}>
              <IconSlot><TableIco /></IconSlot>
              <TextLine><Lbl>套用</Lbl></TextLine>
              <Line2><Lbl>表格格式</Lbl><Caret $ml={3} /></Line2>
            </LargeBtn>
            <LargeBtn $w={106} $pl={3}>
              <IconSlot><CellStyleIco /></IconSlot>
              <TextLine><Lbl>单元格样式</Lbl></TextLine>
              <Line2><Caret /></Line2>
            </LargeBtn>
          </GroupBody>
          <GroupLabel>样式</GroupLabel>
        </Group>

        <Group $w={184}>
          <GroupBody>
            <LargeBtn $w={68}>
              <IconSlot><InsertIco /></IconSlot>
              <TextLine><Lbl>插入</Lbl></TextLine>
              <Line2><Caret /></Line2>
            </LargeBtn>
            <LargeBtn $w={48}>
              <IconSlot><DeleteIco /></IconSlot>
              <TextLine><Lbl>删除</Lbl></TextLine>
              <Line2><Caret /></Line2>
            </LargeBtn>
            <LargeBtn $w={67}>
              <IconSlot><FormatIco /></IconSlot>
              <TextLine><Lbl>格式</Lbl></TextLine>
              <Line2><Caret /></Line2>
            </LargeBtn>
          </GroupBody>
          <GroupLabel>单元格</GroupLabel>
        </Group>

        <Group $w={322}>
          <GroupBody>
            <EditCol>
              <EditRow><Cell $w={28} $ml={4}><SigmaIco /></Cell><Lbl $ml={3}>自动求和</Lbl><Cell $w={24}><Caret /></Cell></EditRow>
              <EditRow><Cell $w={28} $ml={4}><FillIco /></Cell><Lbl $ml={3}>填充</Lbl><Caret $ml={5} /></EditRow>
              <EditRow><Cell $w={28} $ml={4}><EraserIco /></Cell><Lbl $ml={3}>清除</Lbl><Caret $ml={5} /></EditRow>
            </EditCol>
            <LargeBtn $w={86}>
              <IconSlot><SortIco /></IconSlot>
              <TextLine><Lbl>排序和筛选</Lbl></TextLine>
              <Line2><Caret /></Line2>
            </LargeBtn>
            <LargeBtn $w={104}>
              <IconSlot><FindIco /></IconSlot>
              <TextLine><Lbl>查找和选择</Lbl></TextLine>
              <Line2><Caret /></Line2>
            </LargeBtn>
          </GroupBody>
          <GroupLabel>编辑</GroupLabel>
        </Group>

        <Group $w={79}>
          <GroupBody>
            <LargeBtn $w={78}>
              <IconSlot><InvoiceIco /></IconSlot>
              <TextLine><Lbl>发票</Lbl></TextLine>
              <TextLine><Lbl>查验</Lbl></TextLine>
            </LargeBtn>
          </GroupBody>
          <GroupLabel>发票查验</GroupLabel>
        </Group>
        <RibbonRest><ChevUp /></RibbonRest>
      </Ribbon>

      <FormulaBar>
        <NameBox>A1<Caret /></NameBox>
        <Cell $w={45}><SepDots /></Cell>
        <FormulaBtns>
          <Cell $w={56}><XIcon /></Cell>
          <Cell $w={52}><CheckIcon /></Cell>
          <Cell $w={56}><FxText>fx</FxText></Cell>
        </FormulaBtns>
        <FormulaInput><ChevDown /></FormulaInput>
      </FormulaBar>

      <SheetArea>
        <SheetMain>
          <ColHeaders>
            <Corner>
              <Ico width="20" height="20" viewBox="0 0 20 20" style={{ marginLeft: 22, marginTop: 4 }}><path d="M20 0v20H0z" fill="#b5b5b5" /></Ico>
            </Corner>
            {COLS.map(([c, w]) => <ColHead key={c} $w={w} $sel={c === 'A'}>{c}</ColHead>)}
          </ColHeaders>
          <GridBody>
            {ROWS.map(r => (
              <GridRow key={r}>
                <RowHead>{r}</RowHead>
                {COLS.map(([c, w]) => <GridCell key={c} $w={w}>{r === 27 ? R27[c] : ''}</GridCell>)}
              </GridRow>
            ))}
            <ChartFrame><Chart /></ChartFrame>
          </GridBody>
        </SheetMain>
        <VScroll>
          <ScrollBtn><Tri $dir="up" /></ScrollBtn>
          <VTrack><VThumb /></VTrack>
          <ScrollBtn><Tri $dir="down" /></ScrollBtn>
        </VScroll>
      </SheetArea>

      <TabBar>
        <TabsLeft>
          <TabNav><NavTri $left $ml={30} /><NavTri $ml={26} /></TabNav>
          {TABS.map(([t, w, a, last]) => <SheetTab key={t} $w={w} $active={a} $nosep={last}>{t}</SheetTab>)}
          <More>...</More>
          <Cell $w={20} $ml={13} style={{ height: 28 }}><PlusCircle /></Cell>
          <Cell $w={20} $ml={12} style={{ height: 28 }}><SepDots /></Cell>
        </TabsLeft>
        <HScroll>
          <ScrollBtn $w={24}><Tri $dir="left" /></ScrollBtn>
          <HThumb />
          <HTrack />
          <ScrollBtn><Tri $dir="right" /></ScrollBtn>
        </HScroll>
      </TabBar>

      <StatusBar>
        <StatusText>Complete</StatusText>
        <ViewBtn $active><GridView /></ViewBtn>
        <ViewBtn><PageView /></ViewBtn>
        <ViewBtn><BreakView /></ViewBtn>
        <Cell $w={11} $ml={6}><ThinSvgMinus /></Cell>
        <Cell $w={150} $ml={5}><Slider><SliderThumb /></Slider></Cell>
        <Cell $w={14} $ml={5}><ThinSvgPlus /></Cell>
        <Zoom>100%</Zoom>
      </StatusBar>
    </Window>
  );
}
